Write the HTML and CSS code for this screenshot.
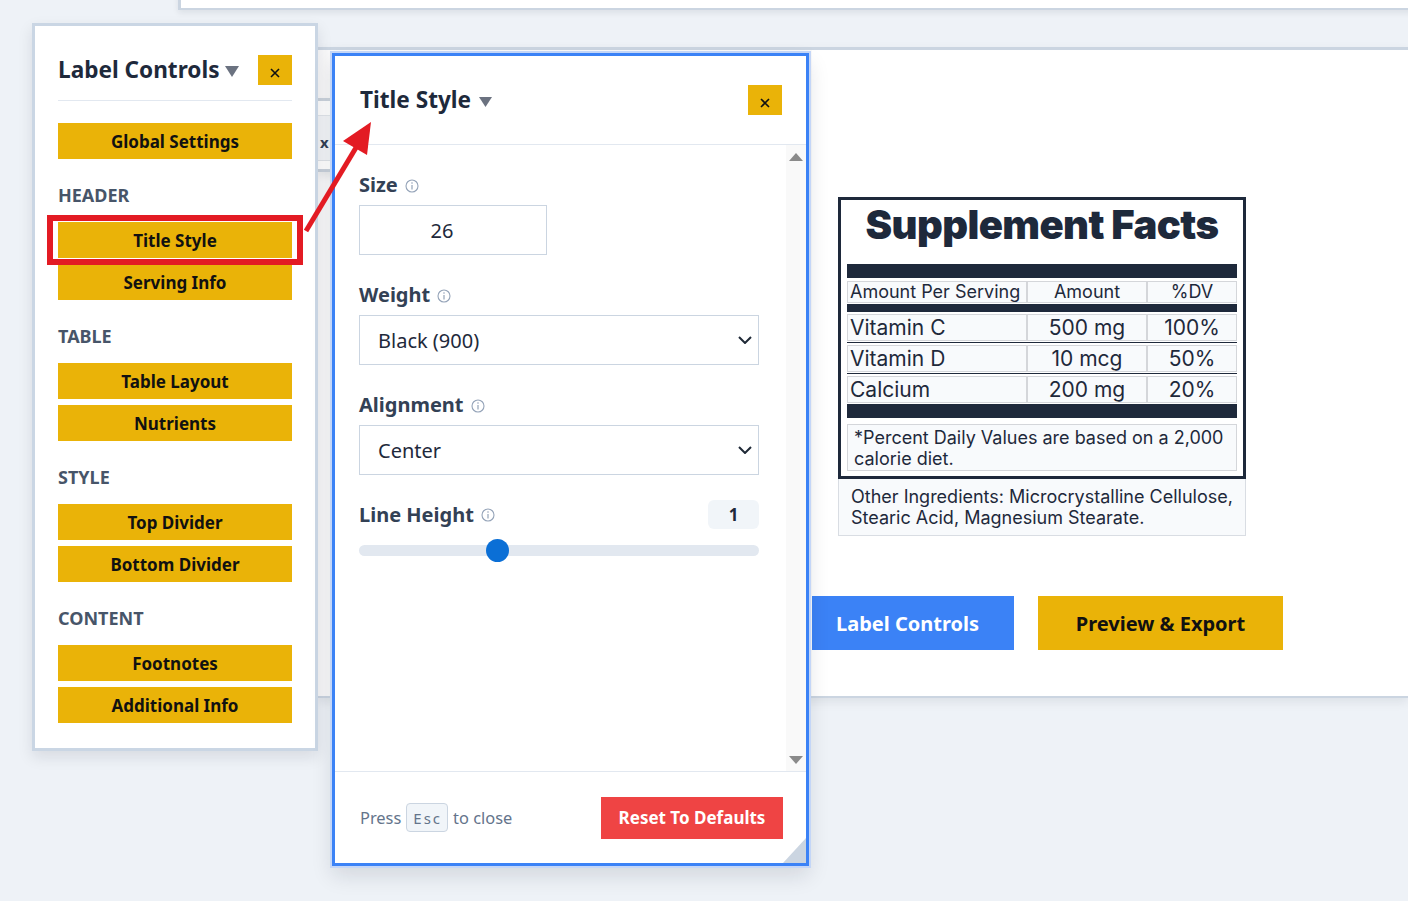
FILE: index.html
```html
<!DOCTYPE html>
<html lang="en">
<head>
<meta charset="utf-8">
<title>Supplement Label Editor</title>
<link rel="stylesheet" href="styles.css">
</head>
<body>
<div class="topbar"></div>

<main class="workspace">
  <div class="ws-side">
    <div class="ghost-pop">
      <div class="ghost-row"><span class="ghost-x">x</span></div>
    </div>
  </div>
  <div class="ws-preview">
    <div class="label-wrap">
      <section class="sf">
        <h1 class="sf-title">Supplement Facts</h1>
        <div class="sf-bar thick"></div>
        <div class="sf-row head">
          <div class="c c1">Amount Per Serving</div>
          <div class="c c2">Amount</div>
          <div class="c c3">%DV</div>
        </div>
        <div class="sf-bar mid"></div>
        <div class="sf-row">
          <div class="c c1">Vitamin C</div>
          <div class="c c2">500 mg</div>
          <div class="c c3">100%</div>
        </div>
        <div class="sf-sep"></div>
        <div class="sf-row">
          <div class="c c1">Vitamin D</div>
          <div class="c c2">10 mcg</div>
          <div class="c c3">50%</div>
        </div>
        <div class="sf-sep"></div>
        <div class="sf-row">
          <div class="c c1">Calcium</div>
          <div class="c c2">200 mg</div>
          <div class="c c3">20%</div>
        </div>
        <div class="sf-bar thick low"></div>
        <div class="sf-foot">*Percent Daily Values are based on a 2,000 calorie diet.</div>
      </section>
      <div class="sf-other">Other Ingredients: Microcrystalline Cellulose, Stearic Acid, Magnesium Stearate.</div>
    </div>
    <div class="actions">
      <button class="act act-blue">Label Controls</button>
      <button class="act act-yellow">Preview &amp; Export</button>
    </div>
  </div>
</main>

<aside class="controls">
  <header class="controls-head">
    <h2 class="panel-title">Label Controls<svg class="caret" width="14" height="11" viewBox="0 0 14 11"><polygon points="0,0 14,0 7,11" fill="#6b7280"/></svg></h2>
    <button class="close-btn" aria-label="Close"><svg width="10" height="10" viewBox="0 0 10 10"><path d="M1 1 L9 9 M9 1 L1 9" stroke="#111" stroke-width="1.6" fill="none"/></svg></button>
  </header>
  <div class="controls-body">
    <button class="ctl-btn">Global Settings</button>
    <h3 class="sec">HEADER</h3>
    <div class="btn-group">
      <button class="ctl-btn">Title Style</button>
      <button class="ctl-btn">Serving Info</button>
    </div>
    <h3 class="sec">TABLE</h3>
    <div class="btn-group">
      <button class="ctl-btn">Table Layout</button>
      <button class="ctl-btn">Nutrients</button>
    </div>
    <h3 class="sec">STYLE</h3>
    <div class="btn-group">
      <button class="ctl-btn">Top Divider</button>
      <button class="ctl-btn">Bottom Divider</button>
    </div>
    <h3 class="sec">CONTENT</h3>
    <div class="btn-group">
      <button class="ctl-btn">Footnotes</button>
      <button class="ctl-btn">Additional Info</button>
    </div>
  </div>
</aside>

<div class="highlight"></div>

<section class="editor">
  <header class="editor-head">
    <h2 class="panel-title lg">Title Style<svg class="caret" width="13" height="10" viewBox="0 0 13 10"><polygon points="0,0 13,0 6.5,10" fill="#6b7280"/></svg></h2>
    <button class="close-btn" aria-label="Close"><svg width="10" height="10" viewBox="0 0 10 10"><path d="M1 1 L9 9 M9 1 L1 9" stroke="#111" stroke-width="1.6" fill="none"/></svg></button>
  </header>
  <div class="editor-body">
    <div class="editor-scroll">
      <div class="field first">
        <div class="f-label">Size <svg class="info" width="14" height="14" viewBox="0 0 14 14"><circle cx="7" cy="7" r="6" fill="none" stroke="#94a3b8" stroke-width="1.1"/><path d="M7 6 V10.5" stroke="#94a3b8" stroke-width="1.2"/><circle cx="7" cy="4" r="0.8" fill="#94a3b8"/></svg></div>
        <div class="num-input">26</div>
      </div>
      <div class="field">
        <div class="f-label">Weight <svg class="info" width="14" height="14" viewBox="0 0 14 14"><circle cx="7" cy="7" r="6" fill="none" stroke="#94a3b8" stroke-width="1.1"/><path d="M7 6 V10.5" stroke="#94a3b8" stroke-width="1.2"/><circle cx="7" cy="4" r="0.8" fill="#94a3b8"/></svg></div>
        <div class="select"><span>Black (900)</span><svg width="14" height="8" viewBox="0 0 14 8"><polyline points="1,1 7,7 13,1" fill="none" stroke="#1f2937" stroke-width="2"/></svg></div>
      </div>
      <div class="field">
        <div class="f-label">Alignment <svg class="info" width="14" height="14" viewBox="0 0 14 14"><circle cx="7" cy="7" r="6" fill="none" stroke="#94a3b8" stroke-width="1.1"/><path d="M7 6 V10.5" stroke="#94a3b8" stroke-width="1.2"/><circle cx="7" cy="4" r="0.8" fill="#94a3b8"/></svg></div>
        <div class="select"><span>Center</span><svg width="14" height="8" viewBox="0 0 14 8"><polyline points="1,1 7,7 13,1" fill="none" stroke="#1f2937" stroke-width="2"/></svg></div>
      </div>
      <div class="range-row">
        <div class="f-label">Line Height <svg class="info" width="14" height="14" viewBox="0 0 14 14"><circle cx="7" cy="7" r="6" fill="none" stroke="#94a3b8" stroke-width="1.1"/><path d="M7 6 V10.5" stroke="#94a3b8" stroke-width="1.2"/><circle cx="7" cy="4" r="0.8" fill="#94a3b8"/></svg></div>
        <span class="badge">1</span>
      </div>
      <div class="track"><span class="thumb"></span></div>
    </div>
    <div class="scrollbar">
      <svg width="14" height="8" viewBox="0 0 14 8"><polygon points="0,8 7,0 14,8" fill="#8a8a8a"/></svg>
      <svg width="14" height="8" viewBox="0 0 14 8"><polygon points="0,0 14,0 7,8" fill="#8a8a8a"/></svg>
    </div>
  </div>
  <footer class="editor-foot">
    <span class="hint">Press <kbd>Esc</kbd> to close</span>
    <button class="reset">Reset To Defaults</button>
  </footer>
  <div class="grip"></div>
</section>

<svg class="arrow" width="1408" height="901" viewBox="0 0 1408 901">
  <line x1="306" y1="231" x2="357" y2="146" stroke="#e31b23" stroke-width="5"/>
  <polygon points="371,122 343,141 367,155" fill="#e31b23"/>
</svg>
</body>
</html>
```

FILE: styles.css
```css
* { box-sizing: border-box; margin: 0; padding: 0; }

html, body { width: 1408px; height: 901px; }

body {
  position: relative;
  overflow: hidden;
  background: #eef2f7;
  font-family: "Noto Sans", "Open Sans", sans-serif;
  color: #1e293b;
}

button { font-family: inherit; border: 0; background: none; cursor: pointer; }

/* ---------- background windows ---------- */
.topbar {
  position: absolute;
  left: 178px;
  top: -20px;
  right: -10px;
  height: 30px;
  background: #fff;
  border-left: 3px solid #cbd5e1;
  border-bottom: 2px solid #cbd5e1;
  box-shadow: 0 3px 6px rgba(15, 23, 42, 0.08);
}

.workspace {
  position: absolute;
  left: 318px;
  top: 47px;
  right: 0;
  height: 651px;
  display: flex;
  background: #fff;
  border-top: 3px solid #cbd5e1;
  border-bottom: 2px solid #cbd5e1;
  box-shadow: 0 4px 10px rgba(15, 23, 42, 0.08);
}

.ws-side {
  position: relative;
  width: 494px;
  flex: none;
  background: #f9f9fa;
}

.ghost-pop {
  position: absolute;
  left: 0;
  top: 48px;
  width: 30px;
  height: 74px;
  background: #fff;
  border-top: 3px solid #ccd4dd;
  border-bottom: 3px solid #c9d1db;
  box-shadow: 0 4px 8px rgba(15, 23, 42, 0.08);
  padding-top: 14px;
}

.ghost-row {
  height: 46px;
  display: flex;
  align-items: center;
  background: #f3f5f8;
  border-top: 1px solid #e2e6eb;
  border-bottom: 1px solid #dfe3e8;
  padding: 8px 0 0 2px;
}

.ghost-x { font-weight: 700; font-size: 15px; color: #334155; }

.ws-preview {
  flex: 1;
  padding: 147px 0 0 26px;
}

.label-wrap { width: 408px; }

/* ---------- supplement facts ---------- */
.sf {
  border: 3px solid #1e293b;
  padding: 1px 6px 5px;
  font-family: Inter, "Noto Sans", sans-serif;
  color: #1e293b;
}

.sf-title {
  font-family: Inter, sans-serif;
  font-weight: 900;
  font-size: 40px;
  line-height: 48px;
  letter-spacing: -0.6px;
  text-align: center;
  margin-bottom: 15px;
}

.sf-bar { background: #1e293b; }
.sf-bar.thick { height: 14px; margin-bottom: 3px; }
.sf-bar.thick.low { margin-top: 1px; margin-bottom: 6px; }
.sf-bar.mid { height: 8px; margin-top: 1px; margin-bottom: 2px; }

.sf-row { display: flex; height: 27px; }
.sf-row.head { height: 22px; }

.c {
  background: #f8fafc;
  border: 1px solid #d4d6da;
  font-size: 21px;
  line-height: 25px;
  white-space: nowrap;
  overflow: hidden;
}
.sf-row.head .c { font-size: 18px; line-height: 20px; }
.c1 { width: 180px; padding-left: 2px; }
.c2 { width: 120px; text-align: center; }
.c3 { flex: 1; text-align: center; }

.sf-sep { height: 1px; background: #1e293b; margin: 1px 0 2px; }

.sf-foot {
  background: #f8fafc;
  border: 1px solid #d4d6da;
  padding: 2px 6px 1px 6px;
  font-size: 18px;
  line-height: 21px;
}

.sf-other {
  background: #f8fafc;
  border: 1px solid #d9dde3;
  border-top: 0;
  padding: 7px 6px 7px 12px;
  font-family: Inter, "Noto Sans", sans-serif;
  font-size: 18px;
  line-height: 21px;
  color: #1e293b;
}

.actions {
  display: flex;
  gap: 24px;
  margin-top: 60px;
  margin-left: -37px;
}

.act {
  height: 54px;
  font-weight: 700;
  font-size: 20px;
}
.act-blue { width: 213px; background: #3b82f6; color: #fff; }
.act-yellow { width: 245px; background: #eab308; color: #111; }

/* ---------- label controls panel ---------- */
.controls {
  position: absolute;
  left: 32px;
  top: 23px;
  width: 286px;
  height: 728px;
  background: #fff;
  border: 3px solid #cad6e4;
  box-shadow: 0 6px 14px rgba(15, 23, 42, 0.10);
  padding: 29px 23px 0;
}

.controls-head {
  display: flex;
  align-items: center;
  justify-content: space-between;
  padding-bottom: 15px;
  border-bottom: 1px solid #e2e8f0;
}

.panel-title {
  display: flex;
  align-items: center;
  font-weight: 700;
  font-size: 22.6px;
  line-height: 30px;
  color: #1e293b;
}
.panel-title .caret { margin-left: 5px; margin-top: 3px; }

.close-btn {
  width: 34px;
  height: 30px;
  background: #eab308;
  display: flex;
  align-items: center;
  justify-content: center;
  padding-top: 5px;
}

.controls-body { padding-top: 22px; }

.ctl-btn {
  display: block;
  width: 100%;
  height: 36px;
  background: #eab308;
  color: #111;
  font-weight: 700;
  font-size: 17px;
}

.btn-group { display: flex; flex-direction: column; gap: 6px; }

.sec {
  font-weight: 700;
  font-size: 18px;
  line-height: 22px;
  color: #475569;
  margin: 25px 0 16px;
}

.highlight {
  position: absolute;
  left: 47px;
  top: 215px;
  width: 256px;
  height: 50px;
  border: 6px solid #e31b23;
}

/* ---------- title style editor ---------- */
.editor {
  position: absolute;
  left: 332px;
  top: 53px;
  width: 477px;
  height: 813px;
  display: flex;
  flex-direction: column;
  background: #fff;
  border: 3px solid #3b82f6;
  box-shadow: 0 0 0 2px #c4d6f7, 0 10px 20px rgba(15, 23, 42, 0.12);
}

.editor-head {
  height: 89px;
  flex: none;
  display: flex;
  align-items: center;
  justify-content: space-between;
  padding: 0 24px 0 25px;
  border-bottom: 1px solid #e2e8f0;
}
.panel-title.lg .caret { margin-left: 8px; margin-top: 3px; }

.editor-body {
  flex: 1;
  display: flex;
  min-height: 0;
}

.editor-scroll {
  flex: 1;
  padding: 28px 27px 0 24px;
}

.field { margin-top: 28px; }
.field.first { margin-top: 0; }

.f-label {
  display: flex;
  align-items: center;
  gap: 7px;
  font-weight: 700;
  font-size: 20px;
  line-height: 24px;
  color: #334155;
  margin-bottom: 8px;
}
.info { margin-top: 1px; }

.num-input {
  width: 188px;
  height: 50px;
  border: 1px solid #cbd5e1;
  display: flex;
  align-items: center;
  justify-content: center;
  padding-right: 22px;
  font-size: 20px;
  color: #1e293b;
}

.select {
  height: 50px;
  border: 1px solid #cbd5e1;
  display: flex;
  align-items: center;
  justify-content: space-between;
  padding: 0 6px 0 18px;
  font-size: 20px;
  color: #1e293b;
}

.range-row {
  margin-top: 25px;
  height: 29px;
  display: flex;
  align-items: center;
  justify-content: space-between;
}
.range-row .f-label { margin-bottom: 0; }

.badge {
  width: 51px;
  height: 29px;
  border-radius: 6px;
  background: #f1f5f9;
  display: flex;
  align-items: center;
  justify-content: center;
  font-weight: 700;
  font-size: 17px;
  color: #1e293b;
}

.track {
  position: relative;
  margin-top: 16px;
  height: 11px;
  border-radius: 6px;
  background: #e2e8f0;
}

.thumb {
  position: absolute;
  left: 127px;
  top: -6px;
  width: 23px;
  height: 23px;
  border-radius: 50%;
  background: #0b6fd6;
}

.scrollbar {
  width: 20px;
  flex: none;
  background: #f9f9f9;
  display: flex;
  flex-direction: column;
  align-items: center;
  justify-content: space-between;
  padding: 8px 0 7px;
}

.editor-foot {
  height: 92px;
  flex: none;
  border-top: 1px solid #e2e8f0;
  display: flex;
  align-items: center;
  justify-content: space-between;
  padding: 0 23px 0 25px;
}

.hint {
  display: flex;
  align-items: center;
  font-size: 16.4px;
  color: #64748b;
}

kbd {
  display: inline-flex;
  align-items: center;
  height: 29px;
  margin: 0 5px;
  padding: 0 5px 0 6px;
  background: #f1f5f9;
  border: 1px solid #cbd5e1;
  border-radius: 4px;
  font-family: "Noto Sans", sans-serif;
  font-size: 15px;
  letter-spacing: 2px;
  color: #64748b;
}

.reset {
  width: 182px;
  height: 42px;
  background: #ef4444;
  color: #fff;
  font-weight: 700;
  font-size: 17px;
}

.grip {
  position: absolute;
  right: 0;
  bottom: 0;
  width: 23px;
  height: 25px;
  background: #cbd5e1;
  clip-path: polygon(100% 0, 100% 100%, 0 100%);
}

.arrow {
  position: absolute;
  left: 0;
  top: 0;
  pointer-events: none;
}
```
